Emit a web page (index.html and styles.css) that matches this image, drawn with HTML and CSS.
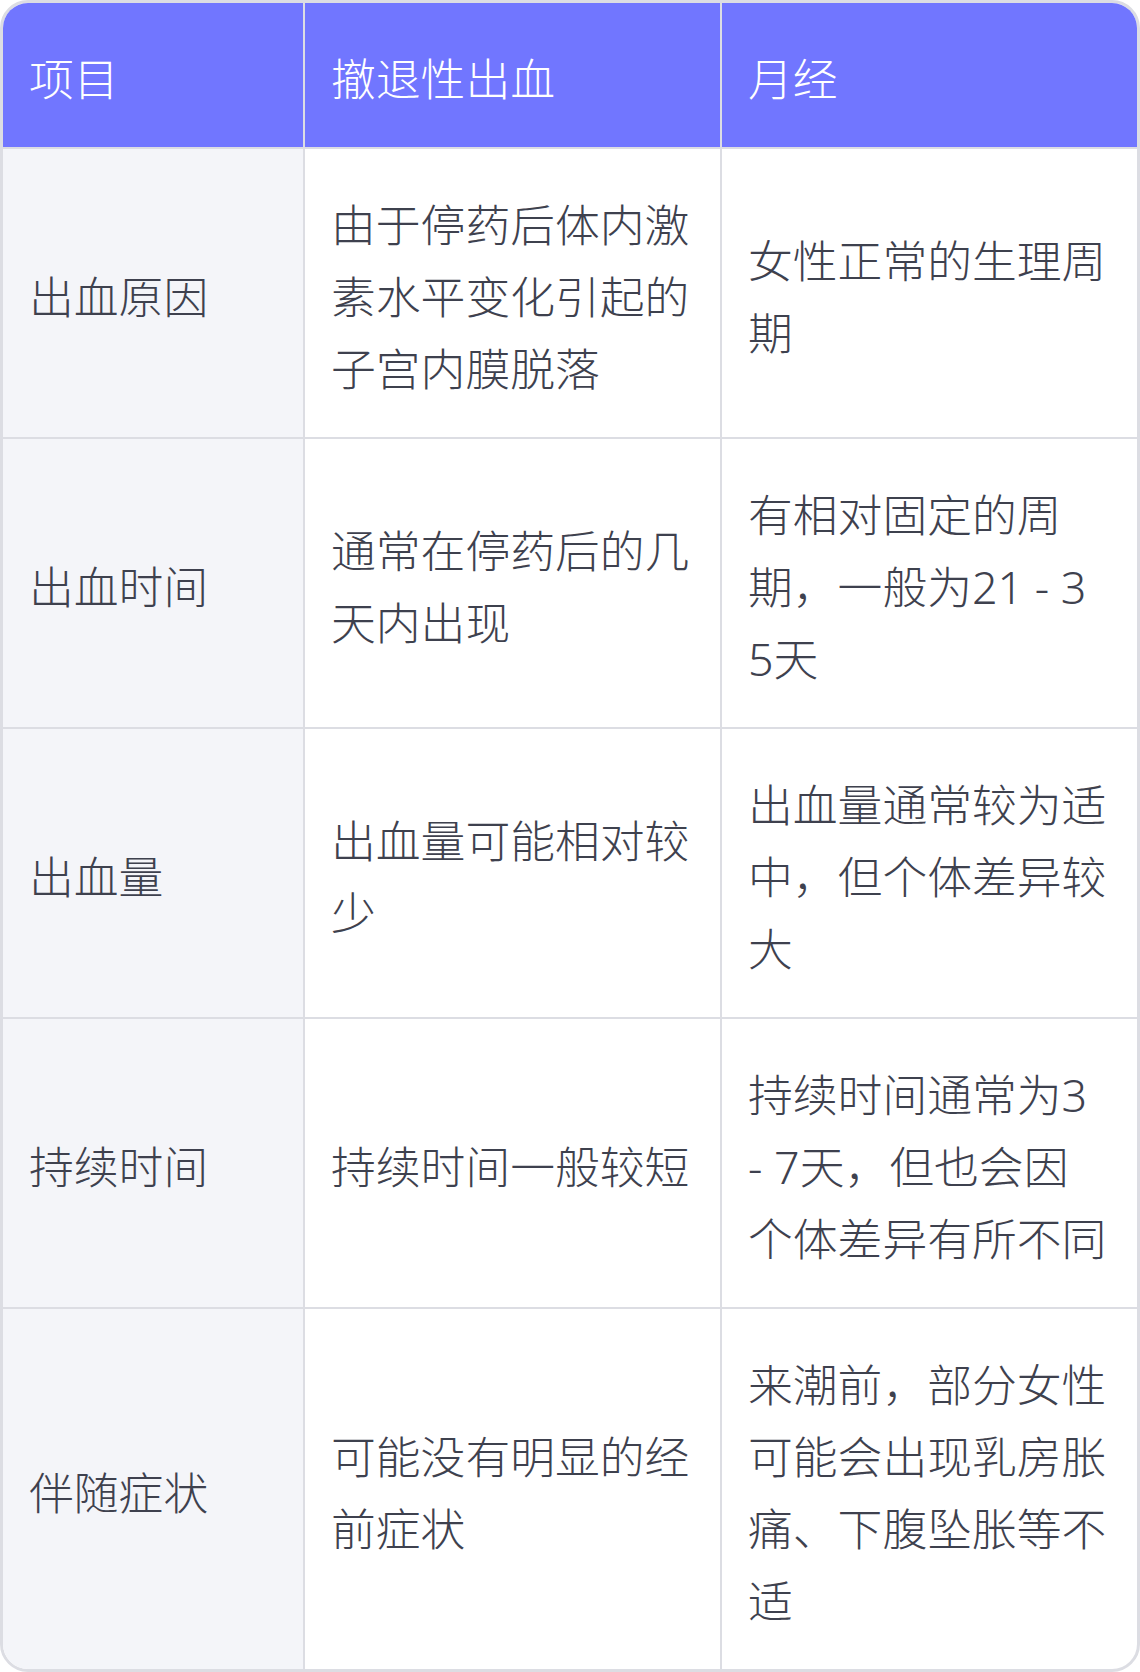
FILE: index.html
```html
<!DOCTYPE html>
<html lang="zh-CN">
<head>
<meta charset="utf-8">
<link rel="stylesheet" href="styles.css">
</head>
<body>
<div class="card">
<table class="cmp">
<colgroup><col class="c1"><col class="c2"><col class="c3"></colgroup>
<thead>
<tr><th>项目</th><th>撤退性出血</th><th>月经</th></tr>
</thead>
<tbody>
<tr><td>出血原因</td><td>由于停药后体内激素水平变化引起的子宫内膜脱落</td><td>女性正常的生理周期</td></tr>
<tr><td>出血时间</td><td>通常在停药后的几天内出现</td><td>有相对固定的周期，一般为21 - 35天</td></tr>
<tr><td>出血量</td><td>出血量可能相对较少</td><td>出血量通常较为适中，但个体差异较大</td></tr>
<tr><td>持续时间</td><td>持续时间一般较短</td><td>持续时间通常为3 - 7天，但也会因个体差异有所不同</td></tr>
<tr><td>伴随症状</td><td>可能没有明显的经前症状</td><td>来潮前，部分女性可能会出现乳房胀痛、下腹坠胀等不适</td></tr>
</tbody>
</table>
</div>
</body>
</html>
```

FILE: styles.css
```css
html, body {
  margin: 0;
  padding: 0;
  background: #ffffff;
}

.card {
  width: 1140px;
  box-sizing: border-box;
  border: 3px solid #dcdde3;
  border-radius: 28px;
  overflow: hidden;
  background: #ffffff;
}

.cmp {
  width: 100%;
  border-collapse: separate;
  border-spacing: 0;
  table-layout: fixed;
  font-family: "Noto Sans", "Noto Sans CJK SC", sans-serif;
  font-weight: 300;
  font-size: 44.8px;
  line-height: 72px;
  color: #3e414e;
}

.c1 { width: 302px; }
.c2 { width: 417px; }
.c3 { width: 415px; }

.cmp th,
.cmp td {
  padding: 40px 28px 32px 26px;
  text-align: left;
  vertical-align: middle;
  word-break: break-all;
  border-right: 2px solid #dcdde3;
  border-bottom: 2px solid #dcdde3;
}

.cmp th:last-child,
.cmp td:last-child {
  border-right: none;
}

.cmp tbody tr:last-child td {
  border-bottom: none;
}

.cmp th {
  background: #7176ff;
  color: #ffffff;
  font-weight: 300;
}

.cmp td:first-child {
  background: #f4f5f9;
}
```
